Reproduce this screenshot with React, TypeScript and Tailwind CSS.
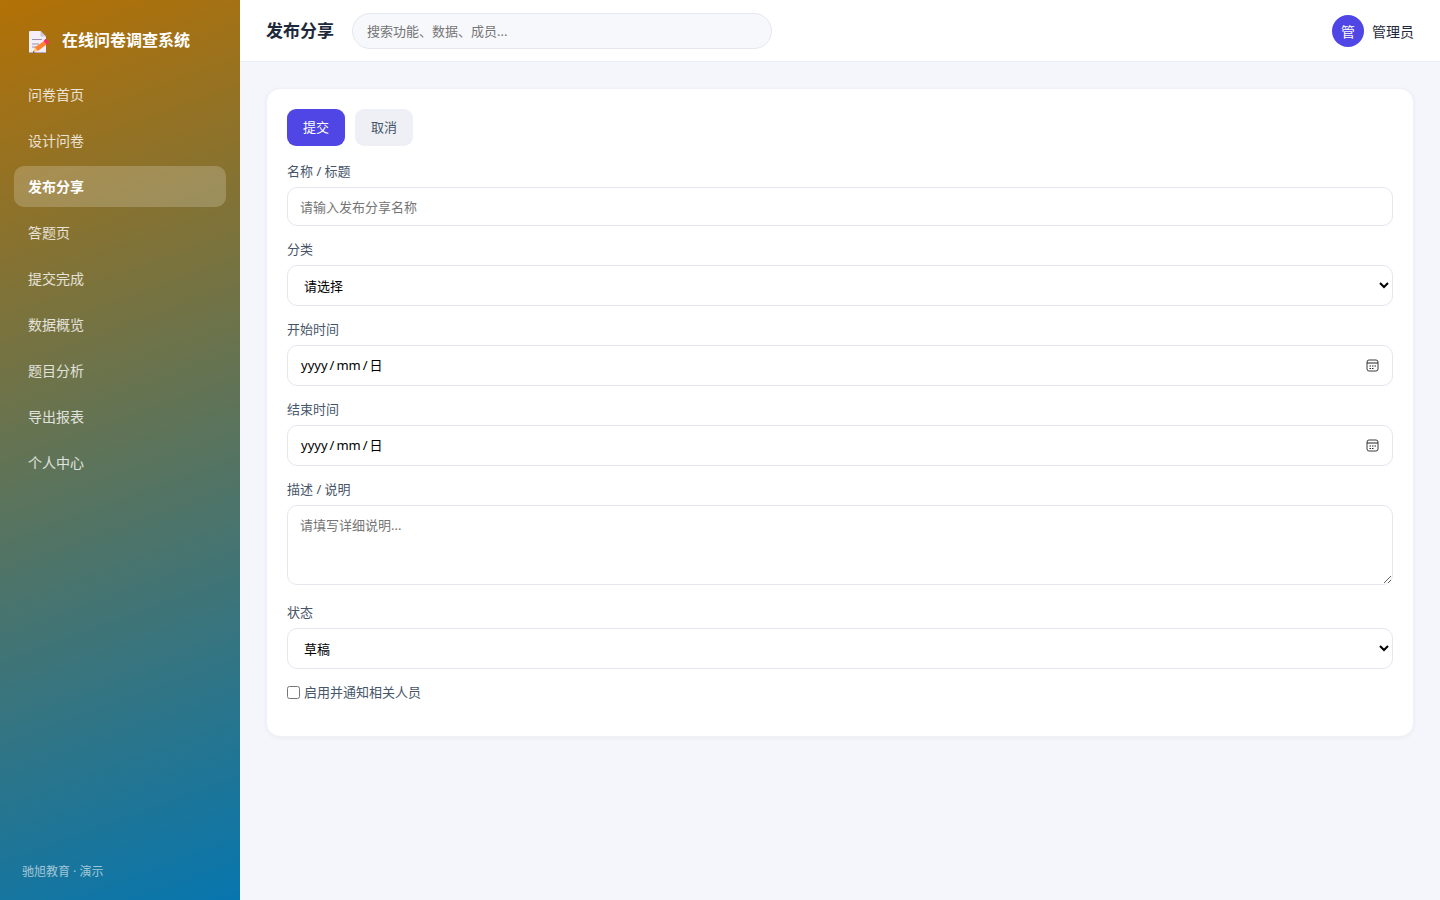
import { useState } from 'react';
import type { ReactNode } from 'react';

const navItems = ['问卷首页', '设计问卷', '发布分享', '答题页', '提交完成', '数据概览', '题目分析', '导出报表', '个人中心'];

const controlClass = 'block w-full rounded-[10px] border border-[#e5e7f0] bg-white px-3 text-[13px] text-black';

function MemoIcon() {
  return (
    <svg width="22" height="22" viewBox="-1 0 22 22" aria-hidden="true">
      <path d="M1 0h10.5L17 5.5V21a1 1 0 0 1-1 1H1a1 1 0 0 1-1-1V1a1 1 0 0 1 1-1z" fill="#f3eef8" />
      <path d="M11.5 0 17 5.5h-4.5a1 1 0 0 1-1-1z" fill="#cdc4d6" />
      <path d="M3 8.5h10M3 13h7M3 16h4" stroke="#9b8fab" strokeWidth="1" />
      <path d="M0 21h17a1 1 0 0 1-1 1H1a1 1 0 0 1-1-1z" fill="#b4a5c4" />
      <path d="m5.6 16.6 9.2-6.4 2.8 3.4-8.8 6.4z" fill="#ff822d" />
      <path d="m5.6 16.6 3.2 3.4-4.8 1.6z" fill="#ffce7c" />
      <path d="m4.5 20 1.3 1.2-2 .6z" fill="#402a32" />
      <path d="m14.6 10.3 1.1-1.7a1.2 1.2 0 0 1 1.6-.3l3 2.6a.9.9 0 0 1-.1 1.2l-2.5 1.7z" fill="#f8315f" />
    </svg>
  );
}

function CalendarIcon() {
  return (
    <svg width="13" height="13" viewBox="0 0 13 13" fill="none" aria-hidden="true">
      <rect x="1" y="1" width="11" height="11" rx="2" stroke="#3a3a3a" />
      <path d="M1 4h11" stroke="#222" />
      <path d="M3.5 7h1.5M6 7h1.5M8.5 7H10M3.5 9.5h1.5M6 9.5h1.5" stroke="#222" />
    </svg>
  );
}

function Sidebar() {
  return (
    <aside className="flex w-60 shrink-0 flex-col bg-[linear-gradient(160deg,#b37105_0%,#0776ae_100%)] px-3.5 pt-5 pb-5 text-white">
      <div className="mb-3.5 flex h-10 items-center gap-3 px-3.5">
        <span className="w-5.5 pt-1"><MemoIcon /></span>
        <span className="text-[16px] leading-6 font-bold">在线问卷调查系统</span>
      </div>
      <nav className="flex flex-col gap-[5px]">
        {navItems.map((item) => (
          <a
            key={item}
            href="#"
            aria-current={item === '发布分享' ? 'page' : undefined}
            className={
              item === '发布分享'
                ? 'flex h-[41px] items-center rounded-[10px] bg-white/20 px-3.5 text-[14px] font-bold text-white'
                : 'flex h-[41px] items-center rounded-[10px] px-3.5 text-[14px] text-white/80'
            }
          >
            {item}
          </a>
        ))}
      </nav>
      <p className="mt-auto px-2 text-[12px] leading-4 text-white/60">驰旭教育 · 演示</p>
    </aside>
  );
}

function Field({ label, id, children }: { label: string; id: string; children: ReactNode }) {
  return (
    <div className="mb-3.5">
      <label htmlFor={id} className="mb-1.5 block text-[13px] leading-[19px] text-[#475569]">{label}</label>
      {children}
    </div>
  );
}

function DateField({ label, id }: { label: string; id: string }) {
  const [value, setValue] = useState('');
  return (
    <Field label={label} id={id}>
      <div className="relative">
        <input
          id={id}
          type="date"
          value={value}
          onChange={(e) => setValue(e.target.value)}
          className={
            value
              ? `${controlClass} h-[41px] [&::-webkit-calendar-picker-indicator]:opacity-0`
              : `${controlClass} h-[41px] [&::-webkit-calendar-picker-indicator]:opacity-0 [&::-webkit-datetime-edit]:opacity-0`
          }
        />
        {!value && (
          <span className="pointer-events-none absolute inset-y-0 left-3.5 flex items-center gap-px text-[13px] text-black">
            <span>yyyy</span>
            <span className="px-px">/</span>
            <span>mm</span>
            <span className="px-px">/</span>
            <span>日</span>
          </span>
        )}
        <span className="pointer-events-none absolute inset-y-0 right-3.5 flex items-center">
          <CalendarIcon />
        </span>
      </div>
    </Field>
  );
}

export default function App() {
  return (
    <div className="flex min-h-screen bg-[#f5f6fb] font-['Noto_Sans','Noto_Sans_CJK_SC',sans-serif] text-[#1e293b]">
      <Sidebar />
      <div className="flex min-w-0 flex-1 flex-col">
        <header className="flex items-center gap-[18px] border-b border-[#eceef4] bg-white px-[26px] pt-[13px] pb-3">
          <h1 className="text-[17px] leading-6 font-bold">发布分享</h1>
          <input
            type="search"
            aria-label="搜索"
            placeholder="搜索功能、数据、成员..."
            className="h-9 w-[420px] rounded-full border border-[#e5e7f0] bg-[#f7f8fc] px-3.5 text-[13px] placeholder:text-[#757575]"
          />
          <div className="ml-auto flex items-center gap-2">
            <span className="flex size-8 items-center justify-center rounded-full bg-[#4f46e5] text-[14px] text-white">管</span>
            <span className="text-[14px]">管理员</span>
          </div>
        </header>
        <main className="p-[26px]">
          <form
            onSubmit={(e) => e.preventDefault()}
            className="rounded-[14px] border border-[#f0f1f6] bg-white p-5 shadow-[0_1px_4px_rgba(30,41,90,0.05)]"
          >
            <div className="mb-4 flex gap-2.5">
              <button type="submit" className="h-[37px] rounded-[9px] bg-[#4f46e5] px-4 text-[13px] text-white">提交</button>
              <button type="button" className="h-[37px] rounded-[9px] bg-[#eef0f5] px-4 text-[13px] text-[#475569]">取消</button>
            </div>
            <Field label="名称 / 标题" id="title">
              <input id="title" type="text" placeholder="请输入发布分享名称" className={`${controlClass} h-[39px] placeholder:text-[#757575]`} />
            </Field>
            <Field label="分类" id="category">
              <select id="category" className={`${controlClass} h-[41px]`}>
                <option>请选择</option>
              </select>
            </Field>
            <DateField label="开始时间" id="start" />
            <DateField label="结束时间" id="end" />
            <div className="pb-1">
              <Field label="描述 / 说明" id="description">
                <textarea id="description" placeholder="请填写详细说明..." className={`${controlClass} h-20 py-2.5 leading-[18px] placeholder:text-[#757575]`} />
              </Field>
            </div>
            <Field label="状态" id="status">
              <select id="status" className={`${controlClass} h-[41px]`}>
                <option>草稿</option>
              </select>
            </Field>
            <label className="mb-3.5 flex items-center gap-1 text-[13px] leading-[19px] text-[#475569]">
              <input type="checkbox" className="size-[13px]" />
              启用并通知相关人员
            </label>
          </form>
        </main>
      </div>
    </div>
  );
}
